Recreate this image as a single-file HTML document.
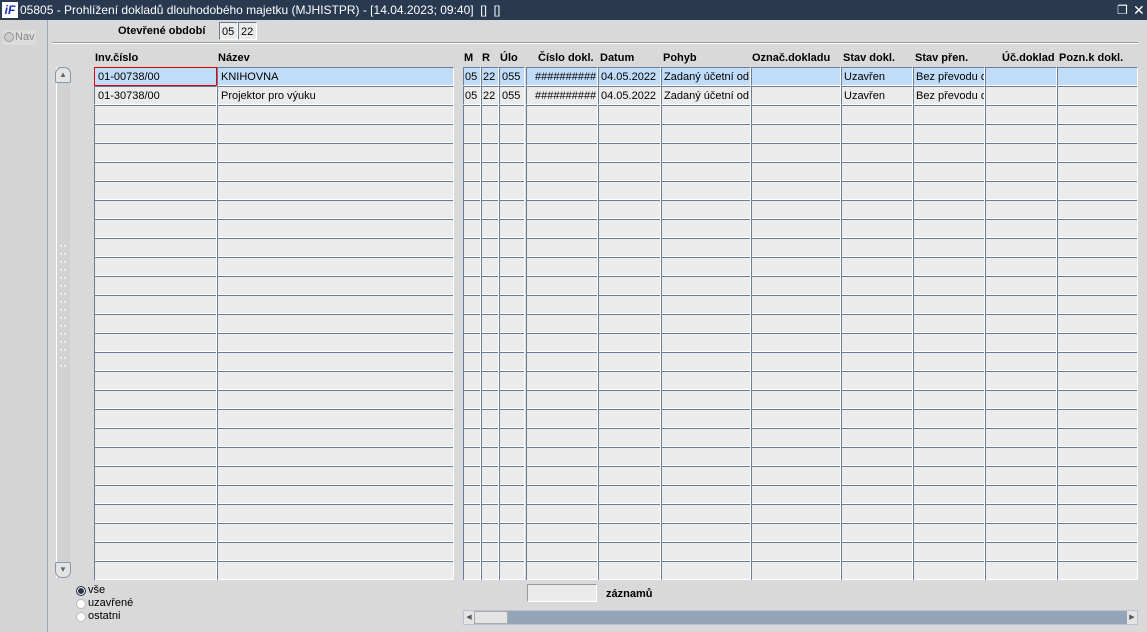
<!DOCTYPE html>
<html><head><meta charset="utf-8"><style>
*{margin:0;padding:0;box-sizing:border-box}
body{width:1147px;height:632px;overflow:hidden;background:#d9d9d9;font-family:"Liberation Sans",sans-serif;font-size:11px;position:relative;color:#000}
.a{position:absolute}
.title{left:0;top:0;width:1147px;height:20px;background:#283950;color:#fff;font-size:12px;line-height:20px}
.col{position:absolute;top:67px;height:513px;
background:linear-gradient(to right,#6a7d98 1px,transparent 1px,transparent calc(100% - 1px),#fff calc(100% - 1px)),
linear-gradient(to bottom,#6a7d98 0,#6a7d98 1px,#ebebeb 1px,#ebebeb 18px,#fff 18px,#fff 19px);
background-size:100% 100%,100% 19px;background-repeat:no-repeat,repeat-y}
.c{position:absolute;height:19px;line-height:18px;padding-left:3px;white-space:nowrap;overflow:hidden;border-left:1px solid #6a7d98;border-top:1px solid #6a7d98;border-bottom:1px solid #fff;border-right:1px solid #fff}
.s{background:#c0dcf7}.g{background:#ebebeb}
.h{position:absolute;top:52px;font-weight:bold;font-size:11px}
.rad{position:absolute;width:10px;height:10px;border-radius:50%;background:#fff;border:1px solid #bbb}
</style></head><body>
<div class="a title"><span style="position:absolute;left:2px;top:2px;width:16px;height:16px;background:#fff;color:#1a2fb0;font-weight:bold;font-style:italic;font-size:12px;line-height:16px;text-align:center">iF</span><span style="position:absolute;left:20px">05805 - Prohlížení dokladů dlouhodobého majetku (MJHISTPR) - [14.04.2023; 09:40]&nbsp; [] &nbsp;[]</span><span style="position:absolute;left:1117px;top:0">&#x2750;</span><span style="position:absolute;left:1133px;font-size:14px">✕</span></div>
<div class="a" style="left:0;top:20px;width:48px;height:612px;background:#d4d4d4;border-right:1px solid #9aa8bb"></div>
<div class="a" style="left:3px;top:30px;width:33px;height:15px;background:#dcdcdc;color:#888;line-height:15px;padding-left:12px">Nav</div>
<div class="rad" style="left:4px;top:32px;background:#ccc;border-color:#999"></div>
<div class="a" style="left:118px;top:25px;font-weight:bold;font-size:11px">Otevřené období</div>
<div class="c g" style="left:219px;top:22px;width:19px;height:18px;padding-left:2px">05</div>
<div class="c g" style="left:238px;top:22px;width:19px;height:18px;padding-left:2px">22</div>
<div class="a" style="left:52px;top:42px;width:1086px;height:2px;border-top:1px solid #9a9a9a;border-bottom:1px solid #fff"></div>
<!-- v scroll -->
<div class="a" style="left:56px;top:67px;width:14px;height:511px;background:#d1d1d1;border-left:1px solid #fff"></div>
<div class="a" style="left:55px;top:67px;width:16px;height:16px;background:#e4e4e4;border:1px solid #8a97a8;border-radius:7px 7px 2px 2px;font-size:8px;text-align:center;line-height:14px;color:#666">▲</div>
<div class="a" style="left:55px;top:562px;width:16px;height:16px;background:#e4e4e4;border:1px solid #8a97a8;border-radius:2px 2px 7px 7px;font-size:8px;text-align:center;line-height:14px;color:#666">▼</div>
<div class="a" style="left:59px;top:242px;width:8px;height:130px;background:radial-gradient(circle,#f4f4f4 0.8px,transparent 1.2px) 0 0/4px 8px"></div>
<!-- headers -->
<div class="h" style="left:95px">Inv.číslo</div><div class="h" style="left:218px">Název</div>
<div class="h" style="left:464px">M</div><div class="h" style="left:482px">R</div><div class="h" style="left:500px">Úlo</div>
<div class="h" style="left:538px">Číslo dokl.</div><div class="h" style="left:600px">Datum</div><div class="h" style="left:663px">Pohyb</div>
<div class="h" style="left:752px">Označ.dokladu</div><div class="h" style="left:843px">Stav dokl.</div><div class="h" style="left:915px">Stav přen.</div>
<div class="h" style="left:1002px">Úč.doklad</div><div class="h" style="left:1059px">Pozn.k dokl.</div>
<!-- columns -->
<div class="col" style="left:94px;width:123px"></div><div class="col" style="left:217px;width:237px"></div>
<div class="col" style="left:463px;width:18px"></div><div class="col" style="left:481px;width:18px"></div><div class="col" style="left:499px;width:26px"></div>
<div class="col" style="left:526px;width:72px"></div><div class="col" style="left:598px;width:63px"></div><div class="col" style="left:661px;width:90px"></div>
<div class="col" style="left:751px;width:90px"></div><div class="col" style="left:841px;width:72px"></div><div class="col" style="left:913px;width:72px"></div>
<div class="col" style="left:985px;width:72px"></div><div class="col" style="left:1057px;width:81px"></div>
<!-- row1 -->
<div class="c s" style="left:94px;top:67px;width:123px;border:1px solid #e00000">01-00738/00</div>
<div class="c s" style="left:217px;top:67px;width:237px">KNIHOVNA</div>
<div class="c s" style="left:463px;top:67px;width:18px;padding-left:1px">05</div><div class="c s" style="left:481px;top:67px;width:18px;padding-left:1px">22</div><div class="c s" style="left:499px;top:67px;width:26px;padding-left:2px">055</div>
<div class="c s" style="left:526px;top:67px;width:72px;padding-left:8px">##########</div><div class="c s" style="left:598px;top:67px;width:63px;padding-left:2px">04.05.2022</div>
<div class="c s" style="left:661px;top:67px;width:90px;padding-left:2px">Zadaný účetní od</div><div class="c s" style="left:751px;top:67px;width:90px"></div>
<div class="c s" style="left:841px;top:67px;width:72px;padding-left:2px">Uzavřen</div><div class="c s" style="left:913px;top:67px;width:72px;padding-left:2px">Bez převodu d</div>
<div class="c s" style="left:985px;top:67px;width:72px"></div><div class="c s" style="left:1057px;top:67px;width:81px"></div>
<!-- row2 -->
<div class="c g" style="left:94px;top:86px;width:123px">01-30738/00</div>
<div class="c g" style="left:217px;top:86px;width:237px">Projektor pro výuku</div>
<div class="c g" style="left:463px;top:86px;width:18px;padding-left:1px">05</div><div class="c g" style="left:481px;top:86px;width:18px;padding-left:1px">22</div><div class="c g" style="left:499px;top:86px;width:26px;padding-left:2px">055</div>
<div class="c g" style="left:526px;top:86px;width:72px;padding-left:8px">##########</div><div class="c g" style="left:598px;top:86px;width:63px;padding-left:2px">04.05.2022</div>
<div class="c g" style="left:661px;top:86px;width:90px;padding-left:2px">Zadaný účetní od</div>
<div class="c g" style="left:841px;top:86px;width:72px;padding-left:2px">Uzavřen</div><div class="c g" style="left:913px;top:86px;width:72px;padding-left:2px">Bez převodu d</div>
<!-- bottom -->
<div class="rad" style="left:76px;top:586px;background:#2a3344;border-color:#2a3344;box-shadow:inset 0 0 0 1px #fff"></div>
<div class="a" style="left:88px;top:584px;font-size:11px">vše</div>
<div class="rad" style="left:76px;top:599px"></div><div class="a" style="left:88px;top:597px">uzavřené</div>
<div class="rad" style="left:76px;top:612px"></div><div class="a" style="left:88px;top:610px">ostatni</div>
<div class="c g" style="left:527px;top:584px;width:70px;height:18px;border-color:#999 #fff #fff #999"></div>
<div class="a" style="left:606px;top:588px;font-weight:bold">záznamů</div>
<div class="a" style="left:463px;top:610px;width:675px;height:15px;background:#95a5b8;border:1px solid #b8c4d2"></div>
<div class="a" style="left:464px;top:611px;width:10px;height:13px;background:#e4e4e4;font-size:7px;line-height:13px;text-align:center;color:#555">◀</div>
<div class="a" style="left:474px;top:611px;width:34px;height:13px;background:#e4e4e4;border:1px solid #aaa"></div>
<div class="a" style="left:1127px;top:611px;width:10px;height:13px;background:#e4e4e4;font-size:7px;line-height:13px;text-align:center;color:#555">▶</div>
</body></html>
